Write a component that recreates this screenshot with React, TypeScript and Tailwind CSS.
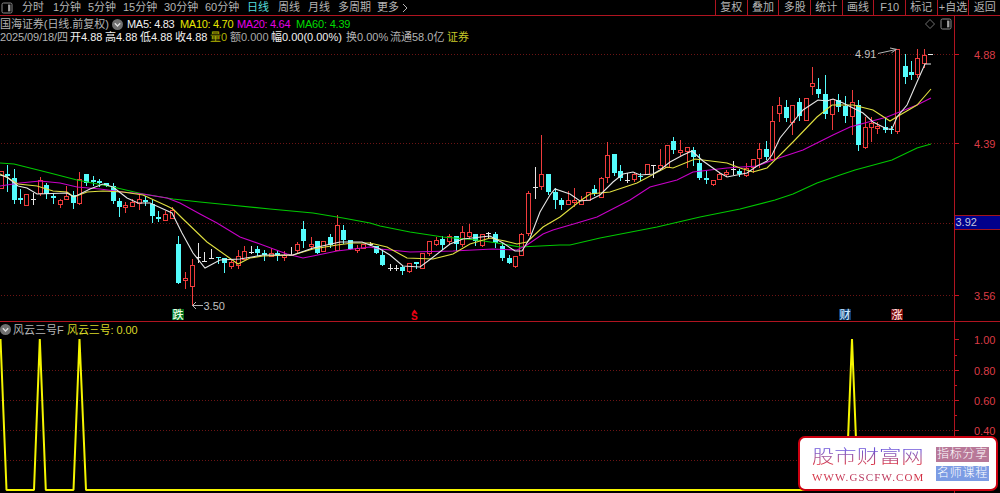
import React from 'react';

type Kind = 'up' | 'down' | 'flat';
// x, high, body top, body bottom, low, kind
type Candle = [number, number, number, number, number, Kind];

const candles: Candle[] = [
  [1, 171, 171, 188, 188, 'up'], [7, 165, 174, 176, 191, 'down'], [14, 169, 178, 200, 203, 'down'],
  [20, 189, 198, 200, 203, 'down'], [26, 194, 194, 205, 205, 'up'], [33, 193, 199, 199, 205, 'flat'],
  [40, 177, 180, 193, 195, 'up'], [46, 183, 185, 194, 198, 'down'], [53, 193, 196, 198, 203, 'down'],
  [60, 199, 200, 204, 207, 'up'], [66, 186, 196, 199, 199, 'up'], [73, 191, 195, 203, 208, 'down'],
  [79, 172, 179, 203, 204, 'up'], [86, 174, 174, 183, 185, 'down'], [93, 176, 180, 182, 185, 'down'],
  [99, 179, 181, 183, 186, 'down'], [106, 183, 183, 186, 186, 'down'], [113, 183, 186, 201, 203, 'down'],
  [119, 198, 201, 207, 216, 'down'], [125, 202, 205, 207, 212, 'up'], [132, 199, 202, 206, 206, 'up'],
  [139, 193, 199, 203, 209, 'up'], [145, 196, 200, 202, 205, 'down'], [152, 200, 204, 216, 222, 'down'],
  [158, 211, 217, 219, 221, 'down'], [165, 211, 214, 220, 220, 'up'], [172, 207, 210, 218, 218, 'up'],
  [178, 236, 244, 283, 283, 'down'], [185, 272, 278, 280, 288, 'up'], [192, 259, 265, 286, 305, 'up'],
  [198, 243, 257, 257, 263, 'flat'], [204, 252, 261, 261, 262, 'flat'], [211, 249, 258, 258, 259, 'flat'],
  [218, 257, 257, 258, 263, 'down'], [224, 258, 258, 263, 272, 'down'], [231, 259, 262, 266, 268, 'up'],
  [238, 250, 256, 265, 268, 'up'], [244, 246, 251, 259, 259, 'up'], [251, 246, 252, 252, 254, 'flat'],
  [257, 246, 249, 253, 255, 'down'], [264, 250, 253, 255, 260, 'down'], [271, 248, 253, 256, 256, 'up'],
  [277, 251, 253, 255, 260, 'down'], [284, 251, 255, 257, 260, 'up'], [291, 247, 255, 255, 256, 'flat'],
  [297, 242, 244, 250, 252, 'up'], [303, 221, 229, 241, 247, 'down'], [311, 237, 244, 246, 248, 'up'],
  [317, 241, 241, 253, 253, 'down'], [323, 241, 241, 251, 251, 'up'], [330, 234, 237, 245, 247, 'down'],
  [337, 215, 225, 250, 250, 'up'], [343, 225, 230, 240, 243, 'down'], [350, 240, 240, 249, 249, 'down'],
  [357, 245, 248, 249, 252, 'up'], [363, 244, 244, 248, 248, 'up'], [370, 242, 244, 244, 246, 'flat'],
  [376, 246, 246, 253, 253, 'down'], [382, 249, 255, 265, 265, 'down'], [390, 264, 268, 268, 271, 'flat'],
  [396, 265, 268, 268, 271, 'flat'], [402, 265, 267, 271, 274, 'down'], [409, 263, 263, 271, 272, 'up'],
  [416, 262, 262, 264, 268, 'down'], [422, 253, 253, 268, 268, 'up'], [429, 241, 241, 253, 255, 'up'],
  [436, 237, 240, 244, 245, 'up'], [442, 236, 239, 245, 249, 'down'], [449, 234, 236, 241, 243, 'up'],
  [456, 236, 236, 244, 250, 'down'], [462, 226, 232, 244, 246, 'up'], [469, 224, 232, 236, 238, 'up'],
  [475, 234, 234, 241, 245, 'down'], [482, 234, 234, 245, 246, 'up'], [488, 232, 233, 233, 238, 'flat'],
  [495, 232, 234, 243, 247, 'down'], [502, 243, 246, 258, 260, 'down'], [509, 255, 258, 263, 263, 'down'],
  [515, 256, 256, 266, 267, 'up'], [521, 233, 234, 255, 255, 'up'], [528, 191, 193, 233, 235, 'up'],
  [535, 167, 187, 187, 199, 'flat'], [541, 135, 174, 186, 189, 'up'], [548, 174, 174, 192, 194, 'down'],
  [555, 188, 192, 200, 208, 'down'], [561, 198, 200, 205, 209, 'down'], [568, 191, 200, 204, 204, 'up'],
  [574, 188, 200, 202, 206, 'up'], [581, 196, 200, 204, 204, 'up'], [588, 192, 192, 200, 200, 'up'],
  [594, 185, 189, 194, 195, 'down'], [601, 177, 178, 197, 197, 'up'], [607, 142, 155, 177, 182, 'up'],
  [614, 154, 154, 173, 175, 'down'], [620, 165, 171, 178, 180, 'down'], [627, 173, 180, 180, 183, 'flat'],
  [634, 172, 174, 179, 181, 'up'], [640, 173, 176, 177, 180, 'down'], [647, 164, 164, 174, 174, 'up'],
  [653, 165, 165, 165, 178, 'flat'], [660, 149, 165, 168, 170, 'up'], [667, 145, 145, 167, 167, 'up'],
  [673, 137, 141, 150, 153, 'down'], [680, 140, 150, 152, 155, 'up'], [687, 147, 147, 151, 167, 'up'],
  [693, 147, 150, 157, 165, 'down'], [699, 154, 163, 178, 179, 'down'], [706, 171, 178, 180, 183, 'down'],
  [713, 180, 180, 184, 185, 'up'], [719, 172, 174, 179, 179, 'up'], [726, 170, 172, 174, 176, 'up'],
  [733, 161, 169, 169, 175, 'flat'], [739, 169, 171, 174, 176, 'down'], [746, 163, 168, 175, 176, 'up'],
  [753, 159, 159, 167, 172, 'up'], [759, 143, 149, 158, 167, 'up'], [766, 141, 149, 157, 159, 'down'],
  [772, 106, 121, 159, 160, 'up'], [779, 97, 105, 113, 121, 'up'], [786, 100, 107, 118, 121, 'down'],
  [792, 105, 105, 122, 134, 'up'], [799, 98, 102, 116, 120, 'down'], [806, 98, 98, 120, 120, 'up'],
  [812, 67, 83, 86, 94, 'up'], [818, 78, 89, 94, 97, 'down'], [825, 75, 94, 114, 118, 'down'],
  [832, 99, 99, 114, 129, 'up'], [838, 94, 100, 107, 111, 'down'], [845, 96, 106, 116, 122, 'down'],
  [852, 90, 102, 116, 134, 'up'], [858, 100, 105, 145, 150, 'down'], [865, 117, 127, 147, 148, 'up'],
  [871, 117, 123, 127, 141, 'up'], [877, 122, 126, 127, 133, 'up'], [885, 118, 127, 130, 132, 'down'],
  [891, 126, 129, 130, 133, 'down'], [897, 49, 49, 131, 133, 'up'], [905, 54, 66, 77, 83, 'down'],
  [911, 61, 72, 75, 79, 'down'], [917, 49, 58, 74, 77, 'up'], [924, 49, 55, 63, 67, 'up'],
  [930, 54, 54, 54, 55, 'flat'],
];

const averages = [
  {
    color: '#00c800',
    points: '0,163 14,164 30,168 50,173 77,180 113,187 143,194 173,199 200,202 230,205 270,209 313,213 343,218 370,223 380,226 410,232 443,237 477,240 497,243 520,247 560,245 570,245 600,238 657,227 700,217 740,209 775,200 793,194 817,183 840,175 855,170 892,160 917,148 931,144',
  },
  {
    color: '#c800c8',
    points: '0,186 20,183 40,181 60,183 77,187 100,189 123,192 143,194 167,198 180,203 200,214 217,223 240,237 260,244 287,254 303,258 313,256 337,251 370,247 380,249 410,252 453,251 493,249 517,250 527,245 543,234 553,230 577,223 597,217 630,200 650,187 677,180 693,172 727,168 757,166 773,160 803,150 833,135 850,127 887,117 917,105 931,98',
  },
  {
    color: '#e0e040',
    points: '0,174 8,178 18,184 37,186 53,191 67,192 74,197 87,192 103,191 123,192 143,195 167,206 173,209 182,218 207,242 238,264 250,258 263,256 293,255 313,249 337,245 353,243 370,243 387,247 407,258 433,259 453,254 470,244 490,238 505,241 517,244 527,242 543,227 560,217 580,201 590,194 610,192 637,183 667,167 673,168 695,159 727,163 740,168 753,172 767,168 793,142 817,117 832,105 853,105 873,110 890,121 900,115 917,105 931,89',
  },
  {
    color: '#e6e6e6',
    points: '0,175 7,177 18,186 27,188 37,194 67,193 74,197 90,189 103,184 113,187 127,198 138,203 150,203 172,213 182,233 193,253 205,268 220,260 240,259 263,255 293,255 313,248 340,242 362,242 380,249 390,255 403,266 420,267 432,258 450,244 463,239 490,236 503,243 515,251 522,251 530,238 540,212 550,195 555,189 570,194 580,201 590,200 600,195 613,182 623,174 633,172 640,175 653,174 660,170 670,162 683,155 692,151 703,161 720,173 727,177 747,173 757,166 767,161 772,155 780,138 793,122 803,110 818,100 827,101 833,99 843,103 863,113 873,122 887,129 892,129 897,117 907,105 917,82 925,64 931,64',
  },
];

const periods = [
  { label: '分时', width: 'w-[31px]' },
  { label: '1分钟', width: 'w-[35px]' },
  { label: '5分钟', width: 'w-[35px]' },
  { label: '15分钟', width: 'w-[41px]' },
  { label: '30分钟', width: 'w-[41px]' },
  { label: '60分钟', width: 'w-[42px]' },
  { label: '日线', width: 'w-[31px]', active: true },
  { label: '周线', width: 'w-[30px]' },
  { label: '月线', width: 'w-[30px]' },
  { label: '多周期', width: 'w-[39px]' },
  { label: '更多', width: 'w-[25px]' },
];

const actions = ['复权', '叠加', '多股', '统计', '画线', 'F10', '标记', '+自选', '返回'];

const quotes = [
  { label: '2025/09/18/四', style: 'w-[70px] text-[#b4b4b4] tracking-[-0.1px]' },
  { label: '开4.88', style: 'w-[35px] text-[#f0f0f0]' },
  { label: '高4.88', style: 'w-[35px] text-[#f0f0f0]' },
  { label: '低4.88', style: 'w-[35px] text-[#f0f0f0]' },
  { label: '收4.88', style: 'w-[35px] text-[#f0f0f0]' },
  { label: '量0', style: 'w-[20px] text-[#b4b400]' },
  { label: '额0.000', style: 'w-[41px] text-[#a8a8a8]' },
  { label: '幅0.00(0.00%)', style: 'w-[75px] text-[#f0f0f0]' },
  { label: '换0.00%', style: 'w-[44px] text-[#b4b4b4]' },
  { label: '流通58.0亿', style: 'w-[57px] text-[#b4b4b4]' },
  { label: '证券', style: 'text-[#c8c828]' },
];

function PanelIcon() {
  return (
    <svg width="12" height="12" viewBox="0 0 12 12" fill="none" stroke="#8a8a8a">
      <rect x="1" y="1" width="10" height="10" rx="1.5" />
      <rect x="7.5" y="3" width="1.5" height="6" fill="#a0a0a0" stroke="#a0a0a0" strokeWidth="0.8" />
    </svg>
  );
}

function DropIcon() {
  return (
    <svg width="11" height="11" viewBox="0 0 11 11" fill="none" className="shrink-0">
      <circle cx="5.5" cy="5.5" r="5.5" fill="#707070" />
      <path d="M2.8 4.3 5.5 7l2.7-2.7" stroke="#e0e0e0" strokeWidth="1.3" />
    </svg>
  );
}

function CandleShape({ candle }: { candle: Candle }) {
  const [x, high, top, bottom, low, kind] = candle;
  if (kind === 'flat') {
    return (
      <g fill="#e6e6e6">
        <rect x={x} y={high} width={1} height={low - high} />
        <rect x={x - 2} y={top} width={5} height={1} />
      </g>
    );
  }
  if (kind === 'down') {
    return (
      <g fill="#54fcfc">
        <rect x={x} y={high} width={1} height={low - high + 1} />
        <rect x={x - 2} y={top} width={5} height={Math.max(1, bottom - top)} />
      </g>
    );
  }
  return (
    <g>
      <rect x={x} y={high} width={1} height={low - high + 1} fill="#f03c3c" />
      <rect x={x - 1.5} y={top + 0.5} width={4} height={Math.max(2, bottom - top)} fill="#000" stroke="#f03c3c" />
    </g>
  );
}

function GridLine({ y }: { y: number }) {
  return <line x1="1" x2="954" y1={y + 0.5} y2={y + 0.5} stroke="#6c1414" strokeDasharray="1 2" />;
}

function Badge({ x, label, fill, color }: { x: number; label: string; fill: string; color: string }) {
  return (
    <g>
      <rect x={x} y="309" width="12" height="11" fill={fill} />
      <text x={x + 0.5} y="318.5" fontSize="11" fontWeight="500" fill={color}>{label}</text>
    </g>
  );
}

function PriceChart() {
  return (
    <svg width="954" height="276" viewBox="0 45 954 276" className="block">
      <g shapeRendering="crispEdges">
        {[54, 143, 223, 295].map((y) => <GridLine key={y} y={y} />)}
        {candles.map((candle) => <CandleShape key={candle[0]} candle={candle} />)}
      </g>
      {averages.map((line) => (
        <polyline key={line.color} points={line.points} fill="none" stroke={line.color} strokeWidth="1.1" />
      ))}
      <g fill="none" stroke="#b4b4b4">
        <path d="M878 53.5 896 49.5M890 48l6.5 1.3-5 3.4" />
        <path d="M203 305.5H192.5M196 302l-3.5 3.5L196 309" />
      </g>
      <text x="855" y="58" fontSize="11" fill="#c0c0c0">4.91</text>
      <text x="203.5" y="310" fontSize="11" fill="#c0c0c0">3.50</text>
      <Badge x={172} label="跌" fill="#006c1c" color="#e6ffe6" />
      <Badge x={839} label="财" fill="#103c6e" color="#c8e6ff" />
      <Badge x={891} label="涨" fill="#780c0c" color="#ffdcdc" />
      <path d="M414.5 309.5 417 312.5h-5z" fill="#f00014" />
      <text x="411" y="320" fontSize="10" fontWeight="700" fill="#f00014">S</text>
    </svg>
  );
}

function SignalChart() {
  return (
    <svg width="954" height="156" viewBox="0 337 954 156" className="block">
      <g shapeRendering="crispEdges">
        {[370, 400, 430, 460].map((y) => <GridLine key={y} y={y} />)}
      </g>
      <polyline
        points="0.5,339 6.5,490 34,490 39.8,339 45.8,490 73.5,490 79.5,339 86,490 846,490 852,339 858,490 931,490"
        fill="none"
        stroke="#f5f500"
        strokeWidth="2"
        strokeLinejoin="bevel"
      />
    </svg>
  );
}

function AxisLabel({ y, label }: { y: number; label: string }) {
  return (
    <g>
      <line x1="954" x2="959" y1={y + 0.5} y2={y + 0.5} stroke="#c81420" />
      <text x="974" y={y + 4.5} fontSize="11" fill="#dc3c46">{label}</text>
    </g>
  );
}

function PriceAxis() {
  return (
    <svg width="45" height="305" viewBox="955 16 45 305" className="block">
      <AxisLabel y={54} label="4.88" />
      <AxisLabel y={143} label="4.39" />
      <AxisLabel y={295} label="3.56" />
      <rect x="955" y="215" width="45" height="15" fill="#00008c" />
      <path d="M955 215.5H1000M955 229.5H1000" stroke="#a01420" />
      <text x="955.5" y="226" fontSize="11" fill="#c8c8dc">3.92</text>
    </svg>
  );
}

function SignalAxis() {
  return (
    <svg width="45" height="171" viewBox="955 322 45 171" className="block">
      <AxisLabel y={339} label="1.00" />
      <AxisLabel y={370} label="0.80" />
      <AxisLabel y={400} label="0.60" />
      <AxisLabel y={430} label="0.40" />
      <path d="M955 355.5h2M955 385.5h2M955 415.5h2" stroke="#c81420" />
    </svg>
  );
}

function SiteMark() {
  return (
    <div className="absolute left-[798px] top-[436px] flex h-[55px] w-[200px] items-center rounded-[7px] border-2 border-[#cc0010] bg-white pl-3">
      <div className="w-[124px] shrink-0 pt-[2px]">
        <div className="h-[26px] w-[92px] origin-left scale-x-[1.24] bg-linear-to-b from-[#6a50d8] from-25% to-[#e02838] to-80% bg-clip-text text-[18px] font-light leading-[26px] text-transparent">
          股市财富网
        </div>
        <div className="w-[116px] whitespace-nowrap bg-linear-to-r from-[#d83040] via-[#b0305c] to-[#d83040] bg-clip-text font-['Liberation_Serif'] text-[11px] leading-[15px] tracking-[1.15px] text-transparent">
          WWW.GSCFW.COM
        </div>
      </div>
      <div className="flex w-[53px] shrink-0 flex-col gap-1 whitespace-nowrap pl-0 text-center text-[12px] font-light leading-[15px] tracking-[0.8px] text-white">
        <div className="h-[15px] bg-[#b87898]">指标分享</div>
        <div className="h-[15px] bg-[#7c9ce4]">名师课程</div>
      </div>
    </div>
  );
}

export default function App() {
  return (
    <div className="relative flex h-[493px] w-[1000px] flex-col overflow-hidden bg-black font-['Liberation_Sans','Noto_Sans_CJK_SC',sans-serif] text-[11px] text-[#b4b4b4]">
      {/* Period toolbar */}
      <div className="flex h-4 shrink-0 items-center border-b border-[#b01420] leading-[15px]">
        <div className="flex h-full w-[22px] items-center border-r border-transparent pl-px">
          <PanelIcon />
        </div>
        {periods.map((period) => (
          <div key={period.label} className={`${period.width} shrink-0 whitespace-nowrap ${period.active ? 'text-[#54dcdc]' : ''}`}>
            {period.label}
          </div>
        ))}
        <svg width="6" height="10" viewBox="0 0 6 10" fill="none" stroke="#b4b4b4">
          <path d="m1 1 4 4-4 4" />
        </svg>
        <div className="ml-auto grid h-full w-[285px] grid-cols-9">
          {actions.map((action) => (
            <div key={action} className="whitespace-nowrap border-l border-[#b01420] text-center">{action}</div>
          ))}
        </div>
      </div>

      {/* Price panel */}
      <div className="flex h-[306px] shrink-0 border-b border-[#b01420]">
        <div className="w-[954px]">
          <div className="flex h-[15px] items-center whitespace-nowrap pt-px leading-[14px]">
            <div className="w-[112px] shrink-0 tracking-[-0.05px]">国海证券(日线.前复权)</div>
            <DropIcon />
            <div className="ml-1 w-[53px] tracking-[-0.3px] text-[#f0f0f0]">MA5: 4.83</div>
            <div className="w-[57px] tracking-[-0.3px] text-[#e6e600]">MA10: 4.70</div>
            <div className="w-[59px] tracking-[-0.3px] text-[#e600e6]">MA20: 4.64</div>
            <div className="tracking-[-0.2px] text-[#00dc00]">MA60: 4.39</div>
            <div className="ml-auto flex items-center gap-1 pr-[2px]">
              <svg width="12" height="12" viewBox="0 0 12 12" fill="none" stroke="#707070">
                <path d="M6 1.5 10.5 6 6 10.5 1.5 6z" />
              </svg>
              <PanelIcon />
            </div>
          </div>
          <div className="flex h-[14px] items-center whitespace-nowrap pb-[2px] leading-[12px]">
            {quotes.map((quote) => (
              <div key={quote.label} className={`shrink-0 ${quote.style}`}>{quote.label}</div>
            ))}
          </div>
          <PriceChart />
        </div>
        <div className="border-l border-[#b01420]">
          <PriceAxis />
        </div>
      </div>

      {/* Signal panel */}
      <div className="flex h-[171px] shrink-0">
        <div className="w-[954px]">
          <div className="flex h-[15px] items-center whitespace-nowrap leading-[14px]">
            <DropIcon />
            <div className="ml-[2px] w-[54px]">风云三号F</div>
            <div className="tracking-[-0.1px] text-[#d8d828]">风云三号: 0.00</div>
          </div>
          <SignalChart />
        </div>
        <div className="border-l border-[#b01420]">
          <SignalAxis />
        </div>
      </div>

      <SiteMark />
    </div>
  );
}
